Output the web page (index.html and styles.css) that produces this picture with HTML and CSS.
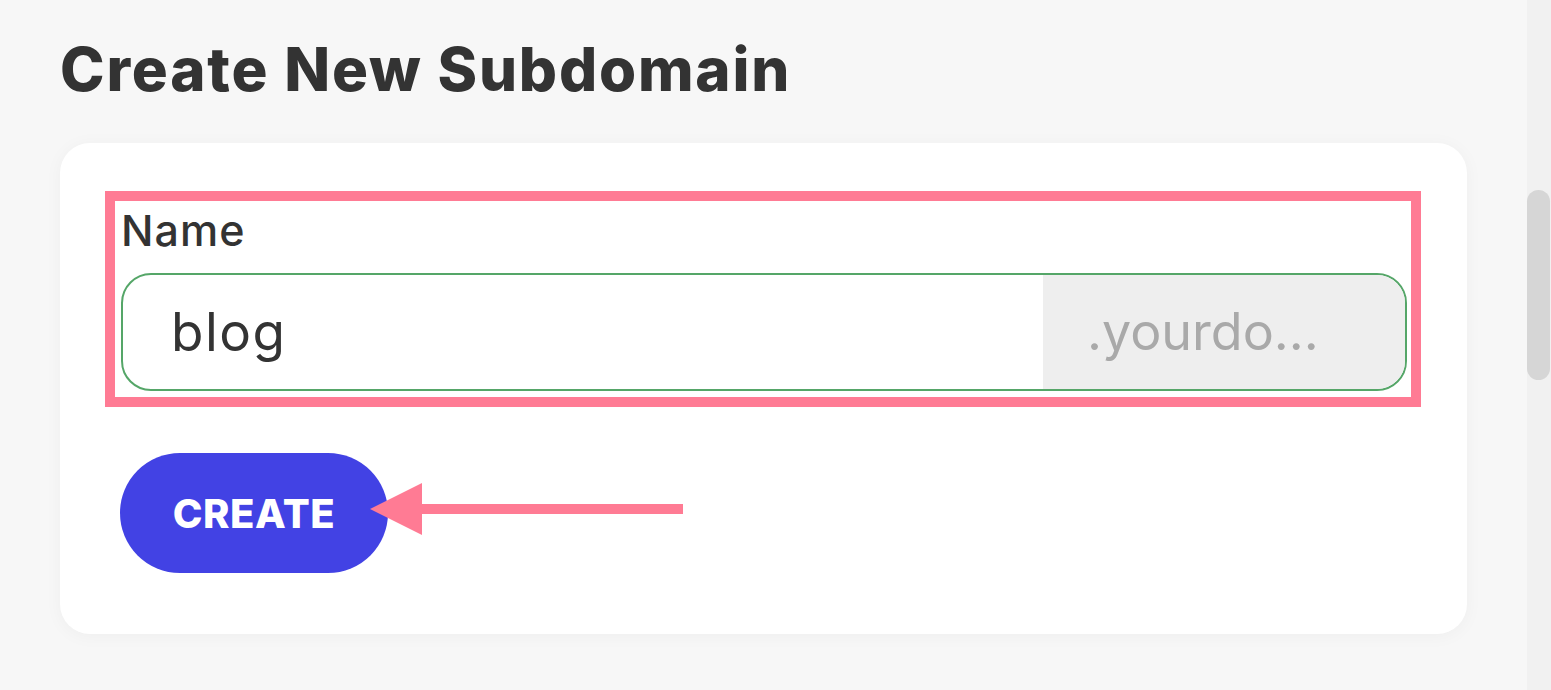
FILE: index.html
```html
<!DOCTYPE html>
<html lang="en">
<head>
<meta charset="utf-8">
<title>Create New Subdomain</title>
<link rel="stylesheet" href="styles.css">
</head>
<body>
  <main class="page">
    <h1 class="title">Create New Subdomain</h1>
    <section class="card">
      <div class="highlight">
        <label class="label" for="name">Name</label>
        <div class="input-group">
          <div class="input-main" id="name">blog</div>
          <div class="input-suffix">.yourdo...</div>
        </div>
      </div>
      <div class="actions">
        <button class="btn" type="button">CREATE</button>
        <svg class="arrow" width="313" height="52" viewBox="0 0 313 52" aria-hidden="true">
          <polygon points="0,26 52,0 52,52" fill="#ff7b94"/>
          <rect x="50" y="21" width="263" height="10" fill="#ff7b94"/>
        </svg>
      </div>
    </section>
  </main>
  <aside class="scrollbar"><div class="thumb"></div></aside>
</body>
</html>
```

FILE: styles.css
```css
html, body {
  margin: 0;
  padding: 0;
}
body {
  height: 690px;
  overflow: hidden;
  display: flex;
  background: #f7f7f7;
  font-family: Inter, "Noto Sans", sans-serif;
  color: #333333;
}
.page {
  flex: 1;
  padding: 39px 60px 0 60px;
}
.title {
  margin: 0;
  font-size: 60px;
  line-height: 1;
  font-weight: 800;
  letter-spacing: 1.8px;
  color: #333333;
}
.card {
  margin-top: 44px;
  background: #ffffff;
  border-radius: 30px;
  padding: 48px 46px 61px 45px;
  box-shadow: 0 2px 18px rgba(0, 0, 0, 0.04);
}
.highlight {
  border: 10px solid #ff7b94;
  padding: 8px 4px 6px 6px;
}
.label {
  display: block;
  font-size: 43px;
  line-height: 1;
  font-weight: 500;
  letter-spacing: 1px;
  color: #333333;
}
.input-group {
  margin-top: 21px;
  height: 118px;
  box-sizing: border-box;
  border: 2px solid #55a668;
  border-radius: 30px;
  overflow: hidden;
  display: flex;
}
.input-main {
  flex: 1;
  display: flex;
  align-items: center;
  padding-left: 48px;
  font-size: 53px;
  line-height: 1;
  letter-spacing: 1.5px;
  color: #333333;
}
.input-suffix {
  width: 362px;
  box-sizing: border-box;
  padding-left: 44px;
  display: flex;
  align-items: center;
  background: #eeeeee;
  color: #a9a9a9;
  font-size: 52px;
  line-height: 1;
}
.actions {
  position: relative;
  margin-top: 46px;
  padding-left: 15px;
  display: flex;
}
.btn {
  width: 268px;
  height: 120px;
  border: none;
  border-radius: 60px;
  background: #4242e4;
  color: #ffffff;
  font-family: Inter, "Noto Sans", sans-serif;
  font-size: 40px;
  font-weight: 800;
  letter-spacing: 0.5px;
  padding: 0;
}
.arrow {
  position: absolute;
  left: 265px;
  top: 30px;
}
.scrollbar {
  width: 24px;
  background: #f1f1f1;
}
.thumb {
  margin-top: 190px;
  width: 23px;
  height: 190px;
  border-radius: 12px;
  background: #d6d6d6;
}
```
